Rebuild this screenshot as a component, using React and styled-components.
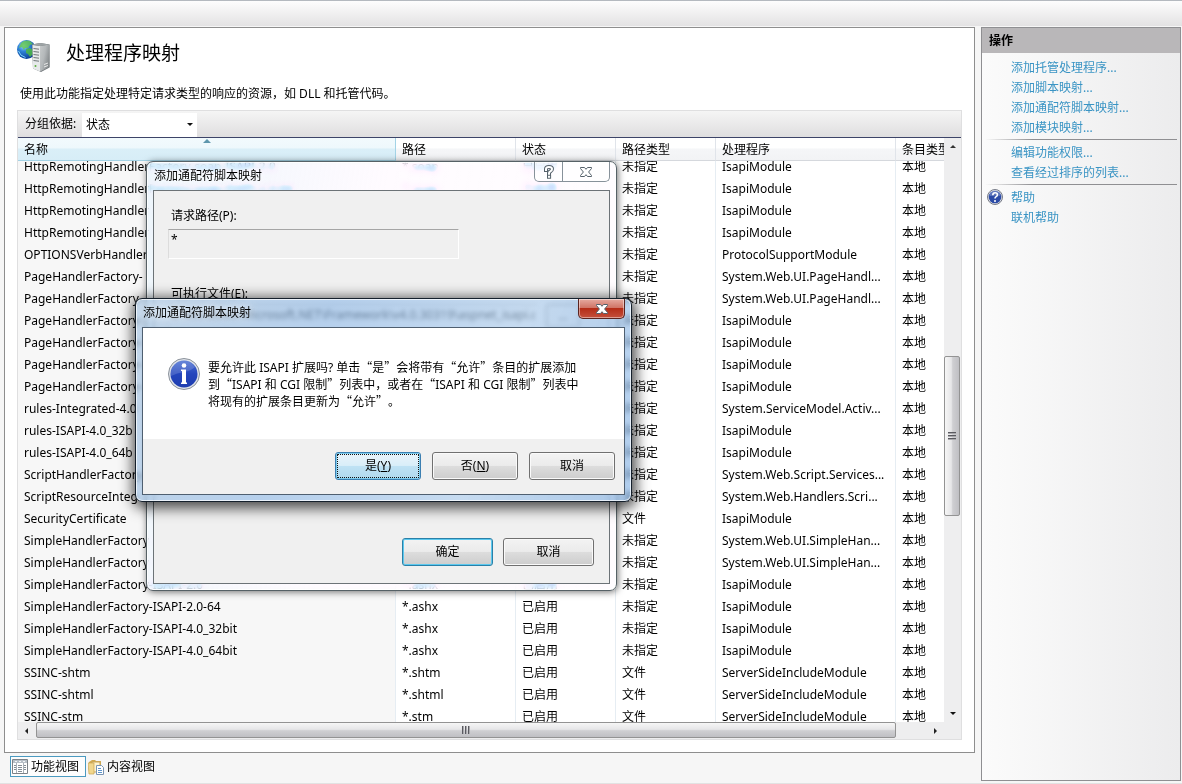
import styled, { createGlobalStyle, css } from "styled-components";

const rows = [
	["HttpRemotingHandlerFactory-soap-ISAPI-2.0", "*.soap", "已启用", "未指定", "IsapiModule"],
	["HttpRemotingHandlerFactory-soap-ISAPI-2.0-64", "*.soap", "已启用", "未指定", "IsapiModule"],
	["HttpRemotingHandler", "", "", "未指定", "IsapiModule"],
	["HttpRemotingHandler", "", "", "未指定", "IsapiModule"],
	["OPTIONSVerbHandler", "", "", "未指定", "ProtocolSupportModule"],
	["PageHandlerFactory-", "", "", "未指定", "System.Web.UI.PageHandl..."],
	["PageHandlerFactory-", "", "", "未指定", "System.Web.UI.PageHandl..."],
	["PageHandlerFactory-", "", "", "未指定", "IsapiModule"],
	["PageHandlerFactory-", "", "", "未指定", "IsapiModule"],
	["PageHandlerFactory-", "", "", "未指定", "IsapiModule"],
	["PageHandlerFactory-", "", "", "未指定", "IsapiModule"],
	["rules-Integrated-4.0", "", "", "未指定", "System.ServiceModel.Activ..."],
	["rules-ISAPI-4.0_32b", "", "", "未指定", "IsapiModule"],
	["rules-ISAPI-4.0_64b", "", "", "未指定", "IsapiModule"],
	["ScriptHandlerFactory", "", "", "未指定", "System.Web.Script.Services..."],
	["ScriptResourceInteg", "", "", "未指定", "System.Web.Handlers.Scri..."],
	["SecurityCertificate", "", "", "文件", "IsapiModule"],
	["SimpleHandlerFactory", "", "", "未指定", "System.Web.UI.SimpleHan..."],
	["SimpleHandlerFactory", "", "", "未指定", "System.Web.UI.SimpleHan..."],
	["SimpleHandlerFactory-ISAPI-2.0", "*.ashx", "已启用", "未指定", "IsapiModule"],
	["SimpleHandlerFactory-ISAPI-2.0-64", "*.ashx", "已启用", "未指定", "IsapiModule"],
	["SimpleHandlerFactory-ISAPI-4.0_32bit", "*.ashx", "已启用", "未指定", "IsapiModule"],
	["SimpleHandlerFactory-ISAPI-4.0_64bit", "*.ashx", "已启用", "未指定", "IsapiModule"],
	["SSINC-shtm", "*.shtm", "已启用", "文件", "ServerSideIncludeModule"],
	["SSINC-shtml", "*.shtml", "已启用", "文件", "ServerSideIncludeModule"],
	["SSINC-stm", "*.stm", "已启用", "文件", "ServerSideIncludeModule"],
];

const App = () => {
	return (
		<Page>
			<GlobalStyle />
			<TopBar />
			<Workspace>
				<LeftSide>
					<FeaturePanel>
						<FeatureTitle>
							<ServerIcon />
							<h1>处理程序映射</h1>
						</FeatureTitle>
						<Description>
							使用此功能指定处理特定请求类型的响应的资源，如 DLL 和托管代码。
						</Description>
						<ListFrame>
							<GroupBar>
								<label htmlFor='group'>分组依据:</label>
								<SelectWrap>
									<select id='group' defaultValue='state'>
										<option value='state'>状态</option>
									</select>
									<Arrow $dir='down' />
								</SelectWrap>
							</GroupBar>
							<ListArea>
								<HandlerTable>
									<thead>
										<tr>
											<th>
												名称
												<SortMark viewBox='0 0 8 4'>
													<path d='M0 4 4 0l4 4z' fill='#5f97ad' />
												</SortMark>
											</th>
											<th>路径</th>
											<th>状态</th>
											<th>路径类型</th>
											<th>处理程序</th>
											<th>条目类型</th>
										</tr>
									</thead>
									<tbody>
										{rows.map(([name, path, state, type, handler], i) => (
											<tr key={i}>
												<Cell>{name}</Cell>
												<Cell>{path}</Cell>
												<Cell>{state}</Cell>
												<Cell>{type}</Cell>
												<Cell>{handler}</Cell>
												<Cell>本地</Cell>
											</tr>
										))}
									</tbody>
								</HandlerTable>
								<VScroll>
									<ScrollButton aria-label='向上滚动'>
										<Arrow $dir='up' />
									</ScrollButton>
									<Track $vertical>
										<Thumb $vertical>
											<Grip $vertical />
										</Thumb>
									</Track>
									<ScrollButton aria-label='向下滚动'>
										<Arrow $dir='down' />
									</ScrollButton>
								</VScroll>
							</ListArea>
							<HScroll>
								<ScrollButton aria-label='向左滚动'>
									<Arrow $dir='left' />
								</ScrollButton>
								<Track>
									<Thumb>
										<Grip />
									</Thumb>
								</Track>
								<ScrollButton aria-label='向右滚动'>
									<Arrow $dir='right' />
								</ScrollButton>
							</HScroll>
						</ListFrame>
					</FeaturePanel>
					<ViewTabs>
						<ViewTab $active>
							<FeatureViewIcon />
							功能视图
						</ViewTab>
						<ViewTab>
							<ContentViewIcon />
							内容视图
						</ViewTab>
					</ViewTabs>
				</LeftSide>
				<ActionPanel>
					<h2>操作</h2>
					<ActionList>
						<li><a href='#managed'>添加托管处理程序...</a></li>
						<li><a href='#script'>添加脚本映射...</a></li>
						<li><a href='#wildcard'>添加通配符脚本映射...</a></li>
						<li><a href='#module'>添加模块映射...</a></li>
					</ActionList>
					<Separator />
					<ActionList>
						<li><a href='#permissions'>编辑功能权限...</a></li>
						<li><a href='#ordered'>查看经过排序的列表...</a></li>
					</ActionList>
					<Separator />
					<ActionList>
						<li>
							<HelpIcon />
							<a href='#help'>帮助</a>
						</li>
						<li><a href='#online'>联机帮助</a></li>
					</ActionList>
				</ActionPanel>
			</Workspace>

			<MapWindow role='dialog' aria-label='添加通配符脚本映射'>
				<WindowTitle>添加通配符脚本映射</WindowTitle>
				<CaptionButtons>
					<CaptionButton aria-label='帮助' $width={27}>
						<svg width='12' height='14' viewBox='0 0 12 14' fill='none' strokeLinecap='square'>
							<path d='M3 5V4q0-2 3-2t3 2q0 1.600-1.600 2.400T6 8.500v.2M6 11.800h.1' stroke='#56616b' strokeWidth='4' />
							<path d='M3 5V4q0-2 3-2t3 2q0 1.600-1.600 2.400T6 8.500v.2M6 11.800h.1' stroke='#fff' strokeWidth='2' />
						</svg>
					</CaptionButton>
					<CaptionButton aria-label='关闭' $width={47}>
						<CloseGlyph />
					</CaptionButton>
				</CaptionButtons>
				<MapClient>
					<Field>
						<label htmlFor='path'>请求路径(P):</label>
						<input id='path' defaultValue='*' readOnly />
					</Field>
					<Field $wide>
						<label htmlFor='exe'>可执行文件(E):</label>
						<FileRow>
							<input
								id='exe'
								defaultValue='C:\Windows\Microsoft.NET\Framework\v4.0.30319\aspnet_isapi.dll'
							/>
							<button>...</button>
						</FileRow>
					</Field>
					<MapFooter>
						<PushButton $width={91} $default>确定</PushButton>
						<PushButton $width={91}>取消</PushButton>
					</MapFooter>
				</MapClient>
			</MapWindow>

			<ConfirmWindow role='alertdialog' aria-label='添加通配符脚本映射'>
				<WindowTitle>添加通配符脚本映射</WindowTitle>
				<CloseRed aria-label='关闭'>
					<CloseGlyph />
				</CloseRed>
				<ConfirmClient>
					<Message>
						<InfoIcon />
						<p>
							要允许此<Latin> ISAPI </Latin>扩展吗<Latin>? </Latin>单击“是”会将带有“允许”条目的扩展添加
							<br />
							到“<Latin>ISAPI </Latin>和<Latin> CGI </Latin>限制”列表中，或者在“<Latin>ISAPI </Latin>和<Latin> CGI </Latin>限制”列表中
							<br />
							将现有的扩展条目更新为“允许”。
						</p>
					</Message>
					<ConfirmFooter>
						<PushButton $width={86} $focused>
							是(<u>Y</u>)
						</PushButton>
						<PushButton $width={86}>
							否(<u>N</u>)
						</PushButton>
						<PushButton $width={86}>取消</PushButton>
					</ConfirmFooter>
				</ConfirmClient>
			</ConfirmWindow>
		</Page>
	);
};

const CloseGlyph = () => (
	<svg width='14' height='12' viewBox='0 0 14 12'>
		<path
			d='M1.500 1.500h4L7 3.300l1.500-1.800h4v1L9.600 6l2.900 3.500v1h-4L7 8.700l-1.500 1.800h-4v-1L4.400 6 1.500 2.500z'
			fill='#fff'
			stroke='#56616b'
			strokeLinejoin='round'
		/>
	</svg>
);

const ServerIcon = () => (
	<svg width='34' height='34' viewBox='0 0 34 34'>
		<defs>
			<radialGradient id='globe' cx='.35' cy='.3' r='.75'>
				<stop offset='0' stopColor='#a8dcff' />
				<stop offset='.4' stopColor='#2f83d6' />
				<stop offset='1' stopColor='#0a3a92' />
			</radialGradient>
			<linearGradient id='side' x1='0' x2='1' y1='0' y2='.6'>
				<stop offset='0' stopColor='#c6c9ca' />
				<stop offset='.5' stopColor='#b4b8ba' />
				<stop offset='1' stopColor='#84898b' />
			</linearGradient>
		</defs>
		<circle cx='9.500' cy='11.500' r='9.500' fill='url(#globe)' />
		<path d='M4 5q4-3.500 9-2l3 3-3 1-2 3-3 0-1 2-2-3-3 1z' fill='#67c94c' opacity='.8' />
		<path d='m9 11 4-1 3 2v4l-3 3-2-3-2-1z' fill='#4eb843' opacity='.85' />
		<path d='M1.500 13q1.500 5 7 6.500' stroke='#7cd3ff' fill='none' />
		<path d='M15 6.500 23 5l9.500 1.500v23L24 34l-8-3.500z' fill='#6f7578' />
		<path d='m15.500 7 7.500 1v25.500l-7-3z' fill='#e6e9ea' />
		<path d='m23 8 9.500-1.500v22.500L23 33.500z' fill='url(#side)' />
		<path d='M15 6.500 23 5l9.500 1.500L23 8z' fill='#9da3a5' />
		<path d='m16.500 10.500 5.500.7m-5.500 2.300 5.500.7m-5.500 2.300 5.500.7m-5.500 2.300 5.500.7m-5.500 2.300 5.500.7' stroke='#6f7578' />
		<path d='m27 26.500 4-1.500m-4 4 4-1.500' stroke='#e8e8e8' />
		<circle cx='18.500' cy='28' r='1' fill='#5cae3d' />
	</svg>
);

const InfoIcon = () => (
	<svg width='32' height='32' viewBox='0 0 32 32'>
		<defs>
			<linearGradient id='info' x1='0' x2='0' y1='0' y2='1'>
				<stop offset='0' stopColor='#4a6fd2' />
				<stop offset='.5' stopColor='#2445bc' />
				<stop offset='1' stopColor='#1e3db0' />
			</linearGradient>
		</defs>
		<circle cx='16' cy='16' r='15.500' fill='#dfe3e9' stroke='#8b929b' />
		<circle cx='16' cy='16' r='13.500' fill='url(#info)' />
		<path d='M3 18a13 13 0 0 1 24-9q-4 4-11 5T3 18z' fill='#fff' opacity='.16' />
		<circle cx='16' cy='7.500' r='2.300' fill='#fff' />
		<path d='M13 11.500h5v13h1v1.500h-6v-1.500h1v-11.500h-1z' fill='#fff' />
	</svg>
);

const HelpIcon = () => (
	<svg width='16' height='16' viewBox='0 0 16 16'>
		<circle cx='8' cy='8' r='7.500' fill='#dfe1e8' stroke='#777b86' />
		<circle cx='8' cy='8' r='6.300' fill='#2c4ba6' />
		<path d='M2.500 7a5.500 5.500 0 0 1 11 0q-5-1-11 0z' fill='#fff' opacity='.25' />
		<path d='M5.800 6.200q0-2.400 2.300-2.400t2.300 2q0 1.200-1.200 1.800T8 9.500' fill='none' stroke='#fff' strokeWidth='1.600' />
		<circle cx='8' cy='12' r='1' fill='#fff' />
	</svg>
);

const FeatureViewIcon = () => (
	<svg width='16' height='16' viewBox='0 0 16 16'>
		<path d='M.5.500h15v14H.5z' fill='#fff' stroke='#7c8288' />
		<path d='M1 1h14v3H1z' fill='#b8c0c8' />
		<path d='M3 2.500h2m2 0h2m2 0h2' stroke='#f4f6f8' />
		<path d='M4.500 4v10M11.500 4v10' stroke='#aab1b8' />
		<path d='M2 6.500h2m-2 2h2m-2 2h2m2-4h4m-4 2h4m-4 2h4m-4 2h4m2-6h2m-2 2h2m-2 2h2' stroke='#858d95' />
	</svg>
);

const ContentViewIcon = () => (
	<svg width='16' height='16' viewBox='0 0 16 16'>
		<path d='M1 3 4 1h3l1 1h5v10H1z' fill='#d1aa51' />
		<path d='M4 3h8v10H4z' fill='#fff4ce' stroke='#c6a45a' />
		<path d='M0 4h6v11H1z' fill='#f1d78d' stroke='#c8a450' strokeWidth='.7' />
		<path d='M8.500 6.500h5l2 2v7h-7z' fill='#fff' stroke='#7a95b3' />
		<path d='M10 9.500h3m-3 2h4m-4 2h4' stroke='#5c94cb' />
	</svg>
);

const GlobalStyle = createGlobalStyle`
	* {
		box-sizing: border-box;
	}
	body {
		margin: 0;
		background: #f6f6f6;
		color: #000;
		font: 12px/20px "Noto Sans", "Noto Sans CJK SC", sans-serif;
		text-spacing-trim: space-all;
	}
	h1, h2, p, ul {
		margin: 0;
		padding: 0;
	}
	button, input, select {
		font: inherit;
		color: inherit;
		margin: 0;
		padding: 0;
	}
`;

const Page = styled.div`
	position: relative;
	display: flex;
	flex-direction: column;
	height: 100vh;
	overflow: hidden;
`;

const TopBar = styled.header`
	height: 26px;
	flex: none;
	border-top: 1px solid #b4b9bf;
	background: linear-gradient(#fdfdfd, #e3e2e3);
`;

const Workspace = styled.div`
	flex: 1;
	min-height: 0;
	display: flex;
	gap: 6px;
	padding: 1px 1px 2px 4px;
	border-bottom: 1px solid #e2e2e2;
`;

const LeftSide = styled.main`
	flex: 1;
	min-width: 0;
	display: flex;
	flex-direction: column;
`;

const FeaturePanel = styled.section`
	flex: 1;
	min-height: 0;
	display: flex;
	flex-direction: column;
	padding: 10px 12px 12px;
	background: #fff;
	border: 1px solid #8e8e8e;
`;

const FeatureTitle = styled.div`
	display: flex;
	align-items: center;
	gap: 15px;
	h1 {
		font-size: 19px;
		font-weight: 400;
		line-height: 28px;
		padding-bottom: 4px;
	}
`;

const Description = styled.p`
	padding: 12px 3px 6px;
	white-space: nowrap;
`;

const ListFrame = styled.div`
	flex: 1;
	min-height: 0;
	display: flex;
	flex-direction: column;
	border: 1px solid #dfdfe0;
`;

const GroupBar = styled.div`
	display: flex;
	align-items: center;
	height: 27px;
	flex: none;
	padding-left: 7px;
	background: linear-gradient(#f5f5f5, #dfdedf);
	border-bottom: 1px solid #3d4468;
	label {
		width: 57px;
		white-space: nowrap;
	}
`;

const SelectWrap = styled.div`
	position: relative;
	width: 115px;
	height: 24px;
	align-self: flex-end;
	background: #fff;
	select {
		appearance: none;
		width: 100%;
		height: 24px;
		padding-left: 4px;
		border: 0;
		background: transparent;
	}
	span {
		position: absolute;
		right: 4px;
		top: 10px;
	}
`;

const Arrow = styled.span`
	display: block;
	width: 0;
	height: 0;
	border: 3px solid transparent;
	${({ $dir }) => $dir === "down" && "border-top-color: #111; border-bottom: 0;"}
	${({ $dir }) => $dir === "up" && "border-bottom-color: #333; border-top: 0;"}
	${({ $dir }) => $dir === "left" && "border-right-color: #222; border-left: 0;"}
	${({ $dir }) => $dir === "right" && "border-left-color: #222; border-right: 0;"}
`;

const ListArea = styled.div`
	flex: 1;
	min-height: 0;
	display: flex;
`;

const HandlerTable = styled.table`
	flex: 1;
	min-width: 0;
	display: flex;
	flex-direction: column;
	overflow: hidden;
	tr {
		display: grid;
		grid-template-columns: 378px 120px 100px 100px 180px 1fr;
	}
	thead {
		display: block;
		flex: none;
	}
	tbody {
		display: block;
		flex: 1;
		min-height: 0;
		overflow: hidden;
	}
	tbody tr:first-child {
		margin-top: -5px;
	}
	th {
		position: relative;
		height: 23px;
		padding: 0 0 0 6px;
		line-height: 24px;
		font-weight: 400;
		text-align: left;
		white-space: nowrap;
		overflow: hidden;
		background: linear-gradient(#fff, #fff 45%, #f5f6f8 50%, #f2f3f5);
		border-right: 1px solid #e0e4ea;
		border-bottom: 1px solid #d5d8dd;
	}
	th:first-child {
		background: linear-gradient(#f2fafd, #eef8fc 45%, #daeff8 50%, #d7edf7);
		border-color: #a3d3e6;
	}
	th:last-child {
		border-right: 0;
	}
`;

const SortMark = styled.svg`
	position: absolute;
	left: 50%;
	top: 1px;
	width: 8px;
	height: 4px;
	margin-left: -4px;
`;

const Cell = styled.td`
	height: 22px;
	padding: 0 0 0 6px;
	line-height: 22px;
	white-space: nowrap;
	overflow: hidden;
	border-right: 1px solid #e6edf3;
	&:first-child {
		background: #f7f7f7;
	}
	&:last-child {
		border-right: 0;
	}
`;

const VScroll = styled.div`
	width: 17px;
	flex: none;
	display: flex;
	flex-direction: column;
	background: #eeeeef;
`;

const HScroll = styled.div`
	display: flex;
	flex: none;
	height: 17px;
	padding-right: 17px;
	background: #eeeeef;
`;

const ScrollButton = styled.button`
	flex: none;
	display: grid;
	place-items: center;
	width: 17px;
	height: 17px;
	border: 0;
	background: transparent;
`;

const Track = styled.div`
	flex: 1;
	display: flex;
	flex-direction: ${({ $vertical }) => ($vertical ? "column" : "row")};
	padding: ${({ $vertical }) => ($vertical ? "201px 1px 0 0" : "0 31px 1px 1px")};
`;

const Thumb = styled.div`
	display: grid;
	place-items: center;
	border: 1px solid #939393;
	border-radius: 2px;
	${({ $vertical }) =>
		$vertical
			? "height: 160px; background: linear-gradient(90deg, #f6f6f6, #e6e6e8 45%, #cfcfd2 55%, #bfbfc3);"
			: "flex: 1; background: linear-gradient(#f6f6f6, #e6e6e8 45%, #cfcfd2 55%, #bfbfc3);"}
`;

const Grip = styled.div`
	width: 8px;
	height: 8px;
	background: repeating-linear-gradient(
		${({ $vertical }) => ($vertical ? "180deg" : "90deg")},
		#5a5a60 0 1px,
		#a9a9ad 1px 2px,
		transparent 2px 3px
	);
`;

const ViewTabs = styled.nav`
	display: flex;
	height: 28px;
	flex: none;
	padding: 3px 0 4px 6px;
`;

const ViewTab = styled.button`
	display: flex;
	align-items: center;
	gap: 3px;
	height: 21px;
	padding: 0 6px 0 1px;
	background: ${({ $active }) => ($active ? "#fdfdfd" : "transparent")};
	border: 1px solid ${({ $active }) => ($active ? "#4b9ac0" : "transparent")};
`;

const ActionPanel = styled.aside`
	width: 200px;
	flex: none;
	border: 1px solid #8f8f92;
	background: linear-gradient(90deg, #fbfbfb, #ececed);
	h2 {
		height: 25px;
		margin-bottom: 4px;
		padding-left: 7px;
		background: #b9b7b9;
		font-size: 12px;
		line-height: 26px;
	}
`;

const ActionList = styled.ul`
	list-style: none;
	li {
		display: flex;
		align-items: center;
		height: 20px;
		padding-left: 29px;
	}
	li svg {
		margin: 0 8px 0 -24px;
	}
	a {
		color: #3a94c4;
		line-height: 18px;
		padding-top: 2px;
		text-decoration: none;
	}
`;

const Separator = styled.div`
	height: 1px;
	margin: 2px 3px;
	background: linear-gradient(90deg, transparent, #8f8f92 25%);
`;

const Window = styled.section`
	position: absolute;
	display: flex;
	flex-direction: column;
	padding: 0 6px 6px;
	border-radius: 7px;
`;

const MapWindow = styled(Window)`
	left: 146px;
	top: 161px;
	width: 471px;
	height: 430px;
	border: 1px solid #566166;
	backdrop-filter: blur(3px) sepia(1) hue-rotate(190deg) saturate(2);
	background: linear-gradient(
		100deg,
		rgba(220, 242, 248, 0.5),
		rgba(255, 255, 255, 0.3) 45%,
		rgba(255, 255, 255, 0.4)
	);
	box-shadow: inset 0 0 0 1px rgba(255, 255, 255, 0.8), 1px 1px 7px rgba(0, 0, 0, 0.55);
`;

const ConfirmWindow = styled(Window)`
	left: 135px;
	top: 298px;
	width: 497px;
	height: 204px;
	border: 1px solid #15202c;
	backdrop-filter: blur(2px);
	background: linear-gradient(
		110deg,
		rgba(168, 198, 228, 0.65),
		rgba(150, 190, 234, 0.65) 35%,
		rgba(175, 207, 240, 0.65) 70%,
		rgba(140, 182, 228, 0.7)
	);
	box-shadow: inset 0 0 0 1px rgba(255, 255, 255, 0.7), 1px 3px 14px 3px rgba(0, 0, 0, 0.7);
`;

const WindowTitle = styled.h2`
	height: 28px;
	flex: none;
	padding-left: 1px;
	font-size: 12px;
	font-weight: 400;
	line-height: 27px;
	text-shadow: 0 0 8px rgba(255, 255, 255, 0.8), 0 0 8px rgba(255, 255, 255, 0.6);
`;

const CaptionButtons = styled.div`
	position: absolute;
	top: 0;
	right: 6px;
	display: flex;
	height: 20px;
	border: 1px solid #87919a;
	border-top: 0;
	border-radius: 0 0 5px 5px;
	background: rgba(255, 255, 255, 0.6);
`;

const CaptionButton = styled.button`
	display: grid;
	place-items: center;
	width: ${({ $width }) => $width}px;
	border: 0;
	background: transparent;
	& + & {
		border-left: 1px solid #87919a;
	}
`;

const CloseRed = styled.button`
	position: absolute;
	top: 0;
	right: 6px;
	display: grid;
	place-items: center;
	width: 47px;
	height: 20px;
	border: 1px solid #5a2420;
	border-top: 0;
	border-radius: 0 0 5px 5px;
	background: linear-gradient(#e6aaa0, #d07567 45%, #b52c17 50%, #c4503c);
	box-shadow: inset 0 0 0 1px rgba(255, 255, 255, 0.45);
`;

const Client = styled.div`
	flex: 1;
	display: flex;
	flex-direction: column;
	background: #f0f0f0;
`;

const MapClient = styled(Client)`
	padding: 15px 15px 17px 14px;
	border: 1px solid #6c7377;
`;

const Field = styled.div`
	display: flex;
	flex-direction: column;
	align-items: flex-start;
	margin-bottom: 25px;
	label {
		padding-left: 3px;
	}
	input {
		width: ${({ $wide }) => ($wide ? "370px" : "291px")};
		height: 30px;
		margin-top: ${({ $wide }) => ($wide ? "0" : "3px")};
		padding: 0 2px 10px;
		background: #f0f0f0;
		border: 1px solid #fff;
		border-top-color: #a5a5a5;
		border-left-color: #dcdcdc;
		outline: none;
	}
`;

const FileRow = styled.div`
	display: flex;
	gap: 8px;
	button {
		width: 34px;
		height: 24px;
		background: #eee;
		border: 1px solid #707070;
		border-radius: 3px;
	}
`;

const MapFooter = styled.div`
	display: flex;
	justify-content: flex-end;
	gap: 10px;
	margin-top: auto;
`;

const PushButton = styled.button`
	width: ${({ $width }) => $width}px;
	height: 28px;
	border: 1px solid #707070;
	border-radius: 3px;
	background: linear-gradient(#f3f3f3, #ebebeb 48%, #dddddd 50%, #cdcdcd);
	box-shadow: inset 0 0 0 1px #fafafa;
	${({ $default }) =>
		$default &&
		css`
			border-color: #2a80a8;
			box-shadow: inset 0 0 0 1px #5bc8ee;
		`}
	${({ $focused }) =>
		$focused &&
		css`
			border-color: #3c7fb1;
			background: linear-gradient(#eaf4fa, #d9eef9 48%, #bfe2f4 50%, #b0d9ee);
			box-shadow: inset 0 0 0 1px #7fcdee;
			outline: 1px dotted #111;
			outline-offset: -3px;
		`}
`;

const ConfirmClient = styled(Client)`
	border: 1px solid #4f5f70;
`;

const Message = styled.div`
	flex: 1;
	display: flex;
	align-items: flex-start;
	gap: 8px;
	padding: 30px 25px 0;
	background: #fff;
	p {
		/* CJK face first, it has the full-width quotes */
		font-family: "Noto Sans CJK SC", sans-serif;
		line-height: 17px;
		white-space: nowrap;
	}
`;

const Latin = styled.span`
	font-family: "Noto Sans", sans-serif;
	line-height: 0;
`;

const ConfirmFooter = styled.div`
	display: flex;
	justify-content: flex-end;
	gap: 11px;
	padding: 13px 9px 14px;
`;

export default App;
